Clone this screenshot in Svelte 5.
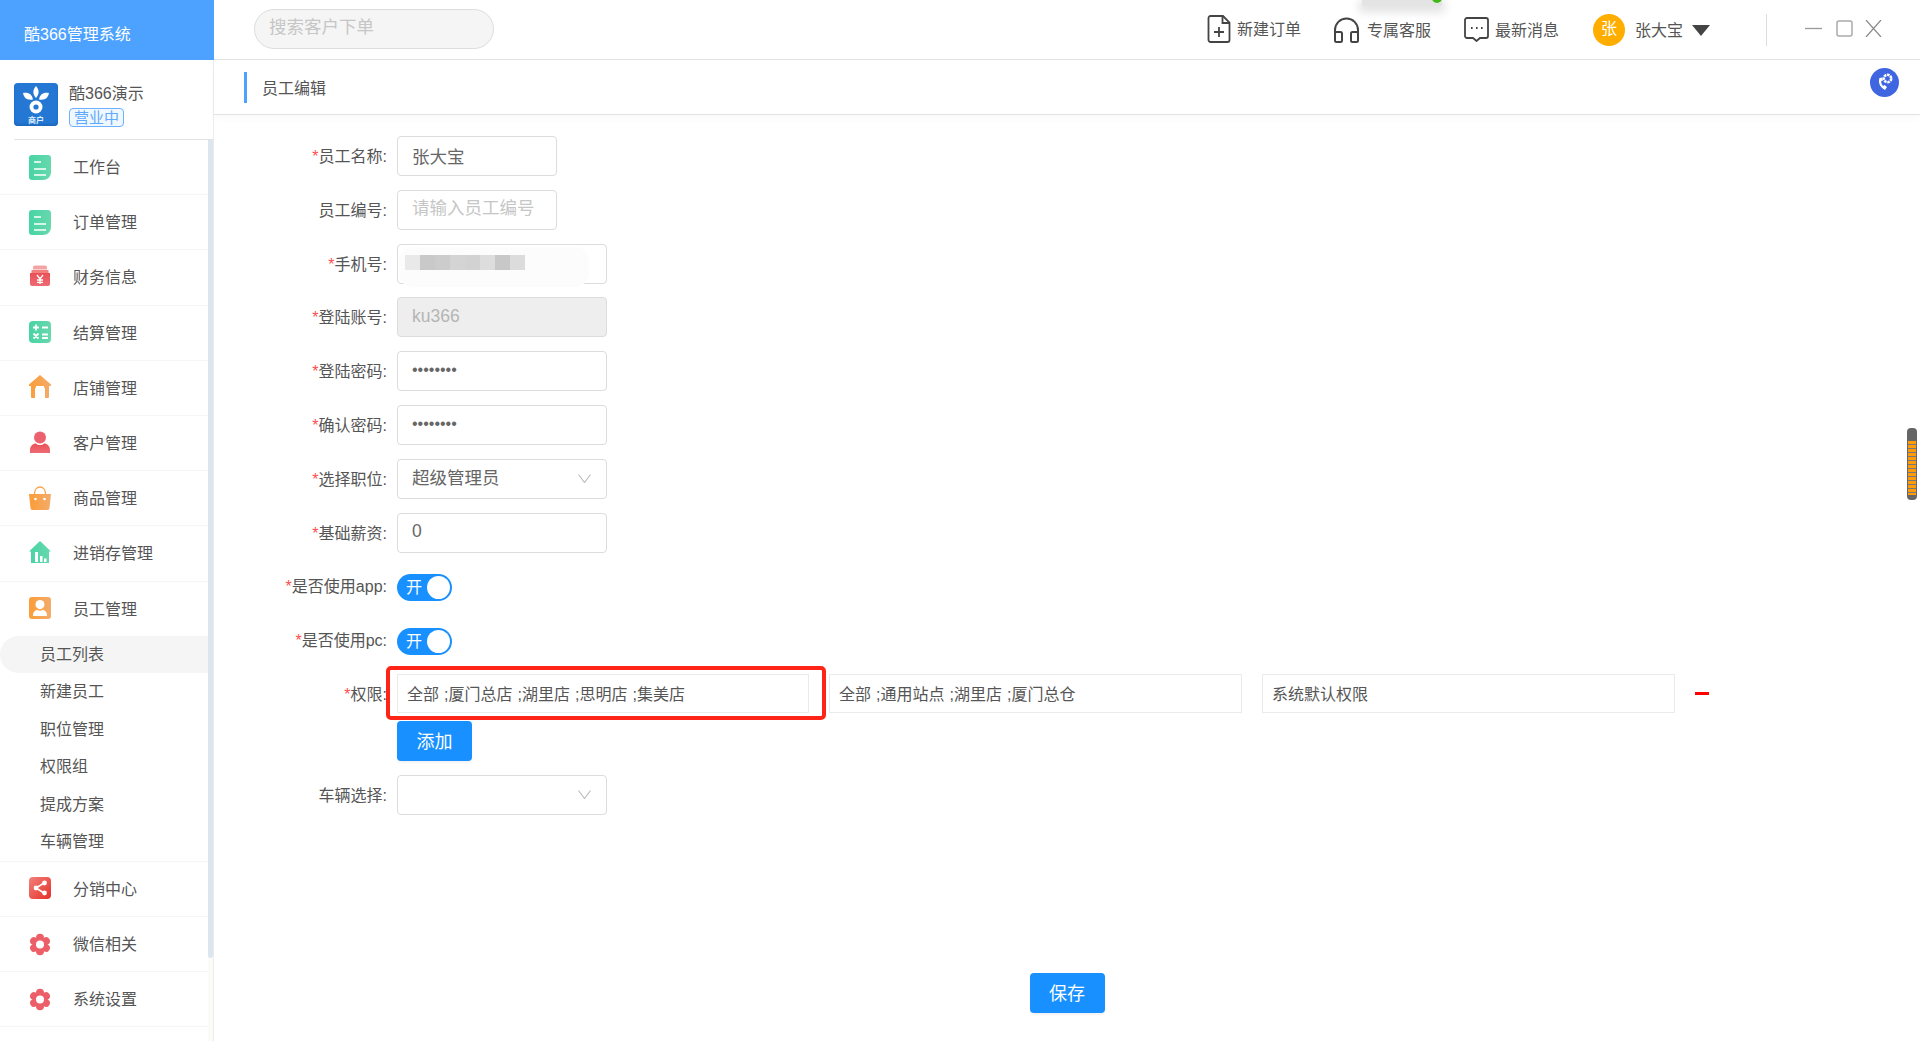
<script>
  const before = [
    { t: '工作台', i: 'doc' }, { t: '订单管理', i: 'doc' }, { t: '财务信息', i: 'money' },
    { t: '结算管理', i: 'calc' }, { t: '店铺管理', i: 'home' }, { t: '客户管理', i: 'user' },
    { t: '商品管理', i: 'bag' }, { t: '进销存管理', i: 'stock' }
  ];
  const subs = ['员工列表', '新建员工', '职位管理', '权限组', '提成方案', '车辆管理'];
  const after = [{ t: '分销中心', i: 'share' }, { t: '微信相关', i: 'gear' }, { t: '系统设置', i: 'gear' }];
  const mosaic = ['#e9e9e9', '#c9c9c9', '#cccccc', '#d4d4d4', '#d2d2d2', '#dddddd', '#c8c8c8', '#dcdcdc'];
  const petals = [0, 60, 120, 180, 240, 300];
</script>

{#snippet icon(k)}
  <svg class="micon" viewBox="0 0 22 25">
    {#if k === 'doc'}
      <path d="M3 0h16a3 3 0 0 1 3 3v14c0 5-4 8-8 8H3a3 3 0 0 1-3-3V3a3 3 0 0 1 3-3z" fill="url(#gGreen)" />
      <path d="M5 7h7M5 14h12M5 20h12" stroke="#fff" stroke-width="1.6" fill="none" />
    {:else if k === 'money'}
      <path d="M4 2.500a2 2 0 0 1 2-2h10a2 2 0 0 1 2 2v2H4z" fill="#f2a3a3" />
      <path d="M2.500 5h17v3h-17z" fill="#f08080" />
      <path d="M1 8h20v11a2 2 0 0 1-2 2H3a2 2 0 0 1-2-2z" fill="url(#gRed)" />
      <path d="M8 10l3 4 3-4M11 14v5M8 15h6M8 17.300h6" stroke="#fff" stroke-width="1.300" fill="none" />
    {:else if k === 'calc'}
      <rect width="22" height="22" y="1" rx="4" fill="url(#gGreen)" />
      <path d="M4 7.500h6M7 4.500v6M13 7.500h6M4.500 13.500l5 5M9.500 13.500l-5 5M13 14.500h6M13 18h6" stroke="#fff" stroke-width="1.800" fill="none" />
    {:else if k === 'home'}
      <path d="M11 0l11 9.500v1.500h-2v11a1 1 0 0 1-1 1h-3v-9a2 2 0 0 0-2-2H8a2 2 0 0 0-2 2v9H3a1 1 0 0 1-1-1V11H0V9.500z" fill="url(#gOrange)" />
      <path d="M7 11h8v1.500H7z" fill="#fff" />
    {:else if k === 'user'}
      <circle cx="11" cy="6.500" r="6" fill="#ec6170" />
      <path d="M1 22v-3c0-4 3-6.500 6-6.500 1 1 2.500 1.500 4 1.500s3-.5 4-1.500c3 0 6 2.500 6 6.500v3z" fill="url(#gRed)" />
    {:else if k === 'bag'}
      <path d="M5.500 8C5.500 3.500 8 1 11 1s5.500 2.500 5.500 7" stroke="#f6a34a" stroke-width="1.300" fill="none" />
      <path d="M0 8h22l-1.500 14a2 2 0 0 1-2 2h-15a2 2 0 0 1-2-2z" fill="url(#gOrange)" />
      <circle cx="6.500" cy="13" r="1.300" fill="#fff" /><circle cx="15.500" cy="13" r="1.300" fill="#fff" />
    {:else if k === 'stock'}
      <path d="M11 0l11 10.500h-2V22H2V10.500H0z" fill="url(#gGreen)" />
      <path d="M6 11h3v10H6zM11 15h2.500v6H11zM15 17.500h2.500V21H15z" fill="#fff" />
    {:else if k === 'staff'}
      <rect width="22" height="22" y="1" rx="3" fill="url(#gOrange)" />
      <circle cx="11" cy="8.500" r="4.500" fill="#fff" />
      <path d="M4 20v-1c0-3 2.500-5 4.500-5 1.500 1 3.500 1 5 0 2 0 4.500 2 4.500 5v1z" fill="#fff" />
    {:else if k === 'share'}
      <rect width="22" height="22" y="1" rx="4" fill="url(#gShare)" />
      <path d="M15 7l-8 5 8 5" stroke="#fff" stroke-width="1.500" fill="none" />
      <circle cx="15.500" cy="7" r="2.400" fill="#fff" /><circle cx="7" cy="12" r="2.400" fill="#fff" /><circle cx="15.500" cy="17" r="2.400" fill="#fff" />
    {:else if k === 'gear'}
      <g transform="translate(11 12.500)">
        {#each petals as a}
          <circle cx="0" cy="-6.800" r="4" fill="#ec5f68" transform="rotate({a})" />
        {/each}
        <circle r="7" fill="#ec5f68" />
        <circle r="4" fill="#fff" />
      </g>
    {/if}
  </svg>
{/snippet}

<svg class="defs" width="0" height="0">
  <defs>
    <linearGradient id="gGreen" x1="0" x2="1" y1="0" y2="0"><stop offset="0" stop-color="#47d4a4" /><stop offset="1" stop-color="#68d8ae" /></linearGradient>
    <linearGradient id="gRed" x1="0" x2="0" y1="0" y2="1"><stop offset="0" stop-color="#ea4f55" /><stop offset="1" stop-color="#ee6b75" /></linearGradient>
    <linearGradient id="gOrange" x1="0" x2="1" y1="0" y2="0"><stop offset="0" stop-color="#fb9c38" /><stop offset="1" stop-color="#f3ac6a" /></linearGradient>
    <linearGradient id="gShare" x1="1" x2="0" y1="1" y2="0"><stop offset="0" stop-color="#e5302a" /><stop offset="1" stop-color="#f2817a" /></linearGradient>
  </defs>
</svg>

<div class="page">
  <aside class="side">
    <div class="brand">酷366管理系统</div>
    <div class="store">
      <div class="logo">
        <svg viewBox="0 0 44 30" class="flower">
          <circle cx="22" cy="21" r="6.500" fill="#fff" /><circle cx="22" cy="21" r="2.600" fill="#2478d4" />
          <path d="M22 0c3.500 4 3.500 8 0 12-3.500-4-3.500-8 0-12zM9 7c6-1 9 1.500 10 6.500-6 1-9-1.500-10-6.500zM35 7c-6-1-9 1.500-10 6.500 6 1 9-1.500 10-6.500z" fill="#fff" />
        </svg>
        <span class="logot">商户</span>
      </div>
      <div class="sinfo">
        <div class="sname">酷366演示</div>
        <div class="stag">营业中</div>
      </div>
    </div>
    <nav class="nav">
      {#each before as m}
        <div class="mrow line">{@render icon(m.i)}<span>{m.t}</span></div>
      {/each}
      <div class="mrow staffrow">{@render icon('staff')}<span>员工管理</span></div>
      <div class="subs">
        {#each subs as s, i}
          <div class="sub" class:on={i === 0}>{s}</div>
        {/each}
      </div>
      {#each after as m}
        <div class="mrow line">{@render icon(m.i)}<span>{m.t}</span></div>
      {/each}
      <div class="thumb"></div>
    </nav>
  </aside>

  <main class="main">
    <header class="top">
      <div class="search">搜索客户下单</div>
      <div class="ghost"><i class="dot"></i></div>
      <div class="tools">
        <div class="tool t1">
          <svg width="24" height="28" viewBox="0 0 24 28" fill="none" stroke="#444" stroke-width="1.800">
            <path d="M1.500 3a2 2 0 0 1 2-2H16l6.500 6.500V25a2 2 0 0 1-2 2h-17a2 2 0 0 1-2-2z" /><path d="M15.500 1v7h7M12 12v10M7 17h10" />
          </svg>
          <span>新建订单</span>
        </div>
        <div class="tool t2">
          <svg width="27" height="26" viewBox="0 0 27 26" fill="none" stroke="#444" stroke-width="2">
            <path d="M2 17v-4a11.500 11.500 0 0 1 23 0v4" /><rect x="2" y="15" width="7" height="10" rx="1.500" /><rect x="18" y="15" width="7" height="10" rx="1.500" />
          </svg>
          <span>专属客服</span>
        </div>
        <div class="tool t3">
          <svg width="25" height="25" viewBox="0 0 25 25" fill="none" stroke="#444" stroke-width="1.800">
            <path d="M3 1h19a2 2 0 0 1 2 2v16a2 2 0 0 1-2 2h-6l-3.500 3L9 21H3a2 2 0 0 1-2-2V3a2 2 0 0 1 2-2z" />
            <path d="M7 11h1.600M12 11h1.600M17 11h1.600" stroke-width="2" />
          </svg>
          <span>最新消息</span>
        </div>
        <div class="avatar">张</div>
        <span class="uname">张大宝</span>
        <i class="tri"></i>
        <i class="vline"></i>
        <div class="win">
          <svg width="17" height="17" viewBox="0 0 17 17" stroke="#999" stroke-width="1.300" fill="none"><path d="M0 8.500h17" /></svg>
          <svg width="17" height="17" viewBox="0 0 17 17" stroke="#aaa" stroke-width="1.500" fill="none"><rect x="1" y="1" width="15" height="15" rx="2" /></svg>
          <svg class="xclose" width="17" height="17" viewBox="0 0 17 17" stroke="#888" stroke-width="1.200" fill="none"><path d="M1 0l15 17M16 0L1 17" /></svg>
        </div>
      </div>
    </header>

    <div class="crumb">
      <b class="bar"></b><span>员工编辑</span>
      <div class="phone">
        <svg width="29" height="29" viewBox="0 0 29 29">
          <circle cx="14.500" cy="14.500" r="14.500" fill="#3f66e0" />
          <path d="M9.500 10c-1.500 4 0 9 5.500 12l2-3-2.500-2-1.500 1c-1.300-1.500-1.800-3-1.800-5l1.800-.5-.8-3z" fill="#fff" />
          <circle cx="17.500" cy="10.500" r="3.700" fill="none" stroke="#fff" stroke-width="2.600" stroke-dasharray="2.600 .7" />
        </svg>
      </div>
    </div>

    <form class="form" onsubmit={(e) => e.preventDefault()}>
      <div class="row"><label class="lab"><em>*</em>员工名称:</label><input class="ipt short" value="张大宝" /></div>
      <div class="row"><label class="lab">员工编号:</label><input class="ipt short" placeholder="请输入员工编号" /></div>
      <div class="row">
        <label class="lab"><em>*</em>手机号:</label>
        <div class="ipt wide masked">
          <div class="smudge"></div>
          <div class="mosaic">
            {#each mosaic as c}<i style="background:{c}"></i>{/each}
          </div>
        </div>
      </div>
      <div class="row"><label class="lab"><em>*</em>登陆账号:</label><input class="ipt wide dis" value="ku366" disabled /></div>
      <div class="row"><label class="lab"><em>*</em>登陆密码:</label><input class="ipt wide pw" type="password" value="12345678" /></div>
      <div class="row"><label class="lab"><em>*</em>确认密码:</label><input class="ipt wide pw" type="password" value="12345678" /></div>
      <div class="row">
        <label class="lab"><em>*</em>选择职位:</label>
        <div class="ipt wide sel"><span class="seltext">超级管理员</span><svg width="13" height="9" viewBox="0 0 13 9" fill="none" stroke="#bbb" stroke-width="1.100"><path d="M.5.500l6 8 6-8" /></svg></div>
      </div>
      <div class="row"><label class="lab"><em>*</em>基础薪资:</label><input class="ipt wide" value="0" /></div>
      <div class="row tg first"><label class="lab"><em>*</em>是否使用app:</label><div class="switch"><span>开</span><i></i></div></div>
      <div class="row tg second"><label class="lab"><em>*</em>是否使用pc:</label><div class="switch"><span>开</span><i></i></div></div>
      <div class="row perm">
        <label class="lab"><em>*</em>权限:</label>
        <div class="pbox a">全部 ;厦门总店 ;湖里店 ;思明店 ;集美店</div>
        <div class="pbox b">全部 ;通用站点 ;湖里店 ;厦门总仓</div>
        <div class="pbox b">系统默认权限</div>
        <i class="minus"></i>
        <div class="redbox"></div>
      </div>
      <div class="addrow"><button type="button" class="btn">添加</button></div>
      <div class="row car">
        <label class="lab">车辆选择:</label>
        <div class="ipt wide sel"><span></span><svg width="13" height="9" viewBox="0 0 13 9" fill="none" stroke="#bbb" stroke-width="1.100"><path d="M.5.500l6 8 6-8" /></svg></div>
      </div>
      <div class="save"><button type="button" class="btn">保存</button></div>
    </form>
  </main>

  <div class="spring"></div>
</div>

<style>
  :global(body) { margin: 0; background: #fff; overflow: hidden; }
  .defs { position: absolute; }
  .page {
    position: relative; display: flex; width: 1920px; height: 1041px; overflow: hidden;
    font-family: "Liberation Sans", "Noto Sans CJK SC", sans-serif; font-size: 16px; color: #555; background: #fff;
  }
  .side { width: 214px; flex: none; box-sizing: border-box; border-right: 1px solid #ececec; }
  .brand { height: 60px; line-height: 70px; padding-left: 24px; background: #4da2ff; color: #fff; width: 214px; box-sizing: border-box; }
  .store { height: 80px; box-sizing: border-box; margin-left: 14px; border-bottom: 1px solid #e2e2e2; display: flex; gap: 11px; padding-top: 23px; }
  .logo { width: 44px; height: 43px; border-radius: 4px; background: #2478d4; display: flex; flex-direction: column; align-items: center; color: #fff; box-shadow: inset 0 -2px 3px #1c68bb; }
  .flower { width: 44px; height: 30px; margin-top: 3px; }
  .logot { font-size: 8px; line-height: 9px; font-weight: 700; color: #dfeeff; }
  .sinfo { margin-top: -1px; }
  .sname { line-height: 24px; color: #555; }
  .stag { width: 55px; height: 19px; box-sizing: border-box; border: 1px solid #6eb0ff; border-radius: 4px; background: #eff7ff; color: #5fa9ff; font-size: 15px; line-height: 17px; text-align: center; margin-top: 2px; }
  .nav { position: relative; width: 213px; }
  .thumb { position: absolute; right: 0; top: 0; width: 5px; height: 818px; background: #dce6ee; border-radius: 0 0 3px 3px; }
  .nav::after { content: ""; position: absolute; right: 0; top: 818px; width: 5px; height: 90px; background: #fdfbf8; }
  .mrow { width: 208px; height: 55.200px; box-sizing: border-box; display: flex; align-items: center; padding-left: 29px; gap: 22px; color: #555; }
  .mrow span { margin-top: -2px; }
  .line { border-bottom: 1px solid #f6f6f6; }
  .staffrow { height: 54.400px; }
  .micon { width: 22px; height: 25px; flex: none; }
  .subs { width: 208px; border-bottom: 1px solid #f6f6f6; }
  .sub { height: 37.500px; line-height: 37.500px; padding-left: 40px; color: #555; border-radius: 19px 0 0 19px; }
  .sub.on { background: #f5f5f5; }

  .main { width: 1706px; flex: none; display: flex; flex-direction: column; }
  .top { height: 60px; box-sizing: border-box; border-bottom: 1px solid #e2e2e2; position: relative; display: flex; align-items: flex-start; }
  .search { margin: 9px 0 0 40px; width: 240px; height: 40px; box-sizing: border-box; border: 1px solid #ddd; border-radius: 20px; background: #f5f5f5; color: #c6c6c6; font-size: 17.500px; line-height: 35px; padding-left: 14px; }
  .ghost { position: absolute; left: 1148px; top: 0; width: 80px; height: 6px; background: #e4e4e4; box-shadow: 0 3px 10px 3px rgba(0,0,0,.12); }
  .dot { position: absolute; left: 70px; top: -7px; width: 10px; height: 10px; border-radius: 50%; background: #3dbb14; }
  .tools { position: absolute; left: 0; top: 0; right: 0; height: 59px; display: flex; align-items: center; padding-left: 993px; color: #555; }
  .tool { display: flex; align-items: center; gap: 6px; }
  .tool span { margin-top: -2px; }
  .t1 { margin-top: -1px; }
  .t2 { margin-left: 32px; gap: 7px; }
  .t3 { margin-left: 33px; gap: 6px; }
  .avatar { margin-left: 34px; width: 32px; height: 32px; border-radius: 50%; background: #ffae00; color: #fff; text-align: center; line-height: 30px; margin-top: 0; }
  .uname { margin-left: 10px; margin-top: -1px; }
  .tri { margin-left: 9px; width: 0; height: 0; border-left: 9px solid transparent; border-right: 9px solid transparent; border-top: 11px solid #444; margin-top: 1px; }
  .vline { margin-left: 56px; width: 1px; height: 32px; background: #ddd; margin-top: 1px; }
  .win { margin-left: 38px; display: flex; gap: 14px; margin-top: -2px; }
  .xclose { margin-left: -2px; }

  .crumb { height: 55px; box-sizing: border-box; border-bottom: 1px solid #e2e2e2; display: flex; align-items: center; position: relative; padding-left: 30px; box-shadow: 0 4px 8px rgba(0,0,0,.025); }
  .bar { width: 3px; height: 31px; background: #4da2ff; margin-right: 15px; }
  .phone { position: absolute; left: 1656px; top: 8px; height: 29px; }

  .form { padding-top: 21px; display: flex; flex-direction: column; }
  .row { display: flex; align-items: center; height: 40px; flex: none; margin-bottom: 13.800px; }
  .lab { width: 173px; flex: none; text-align: right; margin-right: 10px; color: #555; margin-top: -2px; }
  .lab em { color: #ff4d4f; font-style: normal; }
  .ipt { box-sizing: border-box; height: 40px; border: 1px solid #dcdcdc; border-radius: 4px; padding: 0 14px; font: inherit; font-size: 17.500px; color: #666; background: #fff; outline: none; }
  input.ipt { padding-bottom: 2px; }
  .ipt::placeholder { color: #c6c6c6; opacity: 1; }
  .short { width: 160px; }
  .wide { width: 210px; }
  .dis { background: #eeeeee; color: #b5b5b5; }
  .pw { font-size: 16px; }
  .masked { position: relative; padding: 0; }
  .smudge { position: absolute; left: 1px; top: 2px; width: 190px; height: 40px; background: #fcfcfc; border-radius: 14px; }
  .mosaic { position: absolute; left: 7px; top: 10px; display: flex; }
  .mosaic i { width: 15px; height: 15px; display: block; }
  .sel { display: flex; align-items: center; justify-content: space-between; padding-right: 15px; }
  .seltext { margin-top: -4px; }
  .tg.first { margin-top: 1.600px; margin-bottom: 13.500px; }
  .tg.second { margin-bottom: 12.500px; }
  .tg .lab { margin-top: -5px; }
  .switch { position: relative; width: 55px; height: 27px; border-radius: 14px; background: #1890ff; color: #fff; }
  .switch span { position: absolute; left: 9px; top: 2px; line-height: 23px; }
  .switch i { position: absolute; right: 2px; top: 2px; width: 23px; height: 23px; border-radius: 50%; background: #fff; }
  .perm { position: relative; margin-bottom: 7px; }
  .pbox { box-sizing: border-box; height: 39px; border: 1px solid #ebebeb; line-height: 39px; color: #555; flex: none; word-spacing: .6px; }
  .pbox.a { width: 412px; padding-left: 9px; margin-right: 20px; }
  .pbox.b { width: 413px; padding-left: 9px; margin-right: 20px; }
  .minus { width: 14px; height: 3px; background: #f00; margin-left: 0; }
  .redbox { position: absolute; left: 172px; top: -8px; width: 440px; height: 54px; box-sizing: border-box; border: 4px solid #ff2418; border-radius: 5px; }
  .addrow { padding-left: 183px; }
  .btn { width: 75px; height: 40px; border: 0; border-radius: 4px; background: #1890ff; color: #fff; font: inherit; font-size: 18px; padding: 0 0 2px; box-shadow: 0 2px 2px rgba(0,0,0,.05); }
  .car { margin-top: 14px; margin-bottom: 0; }
  .save { margin-top: 158px; display: flex; justify-content: center; }
  .spring { position: absolute; left: 1907px; top: 428px; width: 10px; height: 72px; border-radius: 4px; background: repeating-linear-gradient(#ff9a0a 0 3px, #777 3px 4px) 1px 13px / 8px 54px no-repeat #666; }
</style>
